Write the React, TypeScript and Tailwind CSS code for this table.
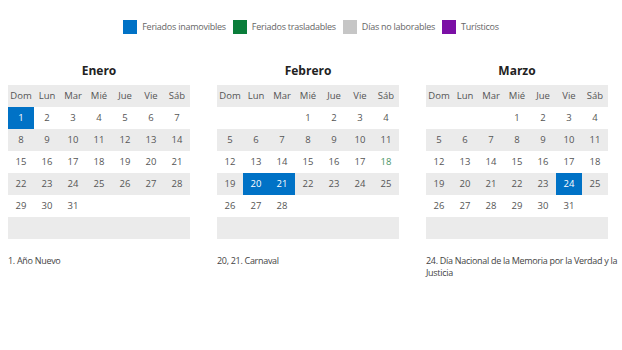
import React from "react";

type Month = {
  name: string;
  offset: number;
  days: number;
  holidays: number[];
  green?: number[];
  note: string[];
};

const MONTHS: Month[] = [
  { name: "Enero", offset: 0, days: 31, holidays: [1], note: ["1. Año Nuevo"] },
  {
    name: "Febrero",
    offset: 3,
    days: 28,
    holidays: [20, 21],
    green: [18],
    note: ["20, 21. Carnaval"],
  },
  {
    name: "Marzo",
    offset: 3,
    days: 31,
    holidays: [24],
    note: ["24. Día Nacional de la Memoria por la Verdad y la", "Justicia"],
  },
];

const WEEKDAYS = ["Dom", "Lun", "Mar", "Mié", "Jue", "Vie", "Sáb"];

const LEGEND = [
  { label: "Feriados inamovibles", color: "bg-[#0072c6]" },
  { label: "Feriados trasladables", color: "bg-[#0a7d3a]" },
  { label: "Días no laborables", color: "bg-[#c6c6c6]" },
  { label: "Turísticos", color: "bg-[#7b0fa5]" },
];

const MonthTable: React.FC<{ month: Month }> = ({ month }) => {
  const cells: (number | null)[] = [];
  for (let i = 0; i < month.offset; i++) cells.push(null);
  for (let d = 1; d <= month.days; d++) cells.push(d);
  while (cells.length < 42) cells.push(null);
  const weeks: (number | null)[][] = [];
  for (let w = 0; w < 6; w++) weeks.push(cells.slice(w * 7, w * 7 + 7));

  return (
    <div className="w-[182px] flex flex-col">
      <h3 className="h-[28px] text-center text-[12px] font-bold text-[#222] leading-[28px]">
        {month.name}
      </h3>
      <div className="grid grid-cols-7 h-[22px] bg-[#ebebeb] items-center">
        {WEEKDAYS.map((d) => (
          <span key={d} className="text-center text-[9.5px] text-[#555]">
            {d}
          </span>
        ))}
      </div>
      {weeks.map((week, wi) => (
        <div
          key={wi}
          className={`grid grid-cols-7 h-[22px] ${wi % 2 === 1 ? "bg-[#ebebeb]" : "bg-white"}`}
        >
          {week.map((d, di) => {
            const holiday = d !== null && month.holidays.includes(d);
            const green = d !== null && (month.green ?? []).includes(d);
            return (
              <span
                key={di}
                className={`flex items-center justify-center text-[9.5px] ${
                  holiday ? "bg-[#0072c6] text-white" : green ? "text-[#4b9467]" : "text-[#555]"
                }`}
              >
                {d ?? ""}
              </span>
            );
          })}
        </div>
      ))}
      <p className="mt-[16px] whitespace-nowrap text-[9px] tracking-[-0.3px] leading-[12px] text-[#444]">
        {month.note.map((line, i) => (
          <React.Fragment key={i}>
            {i > 0 && <br />}
            {line}
          </React.Fragment>
        ))}
      </p>
    </div>
  );
};

export default function App() {
  return (
    <div className="w-[622px] h-[350px] bg-white font-['Open_Sans',sans-serif] overflow-hidden">
      <div className="flex justify-center items-center gap-[7px] pt-[20px] h-[34px]">
        {LEGEND.map((l) => (
          <div key={l.label} className="flex items-center gap-[5px]">
            <span className={`w-[14px] h-[14px] ${l.color}`} />
            <span className="text-[9px] tracking-[-0.25px] text-[#666]">{l.label}</span>
          </div>
        ))}
      </div>
      <div className="flex gap-[27px] pl-[8px] mt-[23px]">
        {MONTHS.map((m) => (
          <MonthTable key={m.name} month={m} />
        ))}
      </div>
    </div>
  );
}
